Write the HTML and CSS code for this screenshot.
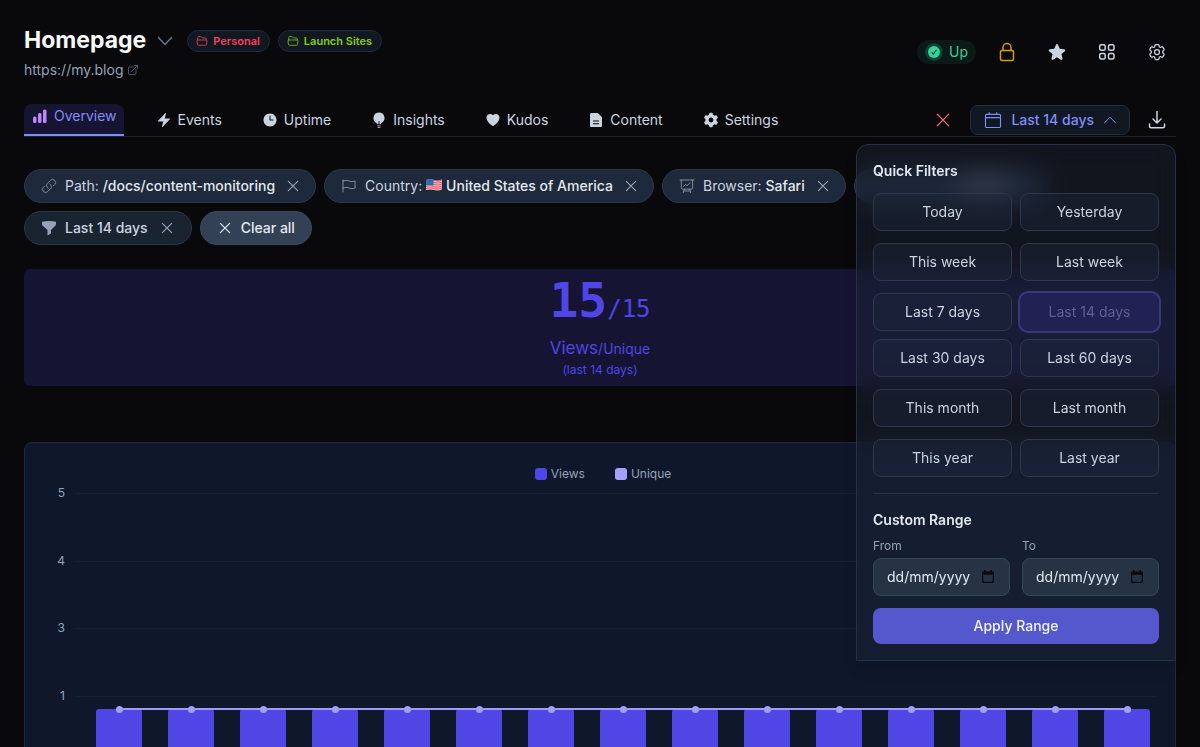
FILE: index.html
```html
<!DOCTYPE html>
<html lang="en">
<head>
<meta charset="utf-8">
<meta name="viewport" content="width=device-width, initial-scale=1">
<title>Homepage</title>
<link rel="stylesheet" href="styles.css">
</head>
<body>
<svg class="sprite" aria-hidden="true">
  <symbol id="folder" viewBox="0 0 24 24"><path d="M3.500 10V5a2 2 0 0 1 2-2h4.300l3 3h5.700a2 2 0 0 1 2 2v2M3.500 10h17a1.500 1.500 0 0 1 1.500 1.700l-.8 7a2 2 0 0 1-2 1.800H4.800a2 2 0 0 1-2-1.800l-.8-7A1.500 1.500 0 0 1 3.500 10z"/></symbol>
  <symbol id="x" viewBox="0 0 24 24"><path d="M5 5l14 14M19 5L5 19"/></symbol>
  <symbol id="calendar" viewBox="0 0 24 24"><path d="M7 2v2.500M17 2v2.500M2 8.800h20M3.500 4.500h17A1.500 1.500 0 0 1 22 6v14.500a1.500 1.500 0 0 1-1.500 1.500h-17A1.500 1.500 0 0 1 2 20.500V6a1.500 1.500 0 0 1 1.500-1.500z"/></symbol>
  <symbol id="date" viewBox="0 0 12 14"><path fill-rule="evenodd" d="M2 0h1.500v1.500h5V0H10v1.500h.8A1.200 1.200 0 0 1 12 2.700v9.100a1.200 1.200 0 0 1-1.200 1.200H1.200A1.200 1.200 0 0 1 0 11.800V2.700a1.200 1.200 0 0 1 1.200-1.200H2zM1.300 4.800v6.900h9.400V4.800z"/></symbol>
</svg>
<main class="page">
  <header class="header">
    <div>
      <div class="title-row">
        <h1 class="title">Homepage</h1>
        <button class="bare chevron" aria-label="Switch site"><svg class="line icon-16" viewBox="0 0 16 16"><path d="M1.500 4.500L8 11.500l6.500-7"/></svg></button>
        <span class="tag tag-red"><svg class="line icon-12"><use href="#folder"/></svg>Personal</span>
        <span class="tag tag-green"><svg class="line icon-12"><use href="#folder"/></svg>Launch Sites</span>
      </div>
      <a class="site-link" href="#">https://my.blog<svg class="line icon-12" viewBox="0 0 24 24"><path d="M13.500 6H5.250A2.250 2.250 0 0 0 3 8.250v10.500A2.250 2.250 0 0 0 5.250 21h10.500A2.250 2.250 0 0 0 18 18.750V10.500M8 16L21 3M15 3h6v6"/></svg></a>
    </div>
    <div class="actions">
      <span class="status"><span class="status-dot"><svg class="icon-12" viewBox="0 0 12 12"><circle cx="6" cy="6" r="6" fill="#34d399"/><path d="M3.600 6.300l1.700 1.700 3.100-4" fill="none" stroke="#0b4a38" stroke-width="1.200"/></svg></span>Up</span>
      <button class="icon-button lock" aria-label="Privacy"><svg class="line icon-20" viewBox="0 0 20 20"><rect x="3.500" y="8.500" width="13" height="10" rx="1.500"/><path d="M6 8.500V5.500a4 4 0 0 1 8 0v3"/></svg></button>
      <button class="icon-button" aria-label="Favourite"><svg class="solid icon-20" viewBox="0 0 24 24"><path d="M10.788 3.210c.448-1.077 1.976-1.077 2.424 0l2.082 5.006 5.404.434c1.164.093 1.636 1.545.749 2.305l-4.117 3.527 1.257 5.273c.271 1.136-.964 2.033-1.960 1.425L12 18.354l-4.627 2.826c-.996.608-2.231-.289-1.960-1.425l1.257-5.273-4.117-3.527c-.887-.760-.415-2.212.749-2.305l5.404-.434z"/></svg></button>
      <button class="icon-button" aria-label="Sites"><svg class="line icon-20" viewBox="0 0 20 20"><rect x="2.700" y="2.700" width="5.500" height="5.500" rx="1.500"/><rect x="11.500" y="2.700" width="5.500" height="5.500" rx="1.500"/><rect x="2.700" y="11.500" width="5.500" height="5.500" rx="1.500"/><rect x="11.500" y="11.500" width="5.500" height="5.500" rx="1.500"/></svg></button>
      <button class="icon-button gear" aria-label="Preferences"><svg class="line icon-20" viewBox="0 0 24 24"><path d="M9.594 3.940c.090-.542.560-.940 1.110-.940h2.593c.550 0 1.020.398 1.110.940l.213 1.281c.063.374.313.686.645.870.074.040.147.083.220.127.325.196.720.257 1.075.124l1.217-.456a1.125 1.125 0 0 1 1.370.490l1.296 2.247a1.125 1.125 0 0 1-.260 1.431l-1.003.827c-.293.241-.438.613-.430.992a7 7 0 0 1 0 .255c-.008.378.137.750.430.991l1.004.827c.424.350.534.955.260 1.430l-1.298 2.247a1.125 1.125 0 0 1-1.369.491l-1.217-.456c-.355-.133-.750-.072-1.076.124a7 7 0 0 1-.220.128c-.331.183-.581.495-.644.869l-.213 1.281c-.090.543-.560.940-1.110.940h-2.594c-.550 0-1.019-.398-1.110-.940l-.213-1.281c-.062-.374-.312-.686-.644-.870a7 7 0 0 1-.220-.127c-.325-.196-.720-.257-1.076-.124l-1.217.456a1.125 1.125 0 0 1-1.369-.490l-1.297-2.247a1.125 1.125 0 0 1 .260-1.431l1.004-.827c.292-.240.437-.613.430-.991a7 7 0 0 1 0-.255c.007-.380-.138-.751-.430-.992l-1.004-.827a1.125 1.125 0 0 1-.260-1.430l1.297-2.247a1.125 1.125 0 0 1 1.370-.491l1.216.456c.356.133.751.072 1.076-.124q.108-.066.220-.128c.332-.183.582-.495.644-.869z"/><circle cx="12" cy="12" r="3"/></svg></button>
    </div>
  </header>

  <div class="toolbar">
    <nav class="tabs" aria-label="Sections">
      <a class="tab tab-active" href="#"><svg class="solid icon-16" viewBox="0 0 16 16"><rect x="1" y="8.500" width="3.500" height="6.500" rx="1.500"/><rect x="6" y="5" width="3.500" height="10" rx="1.500"/><rect x="11" y="1.500" width="3.500" height="13.500" rx="1.500"/></svg>Overview</a>
      <a class="tab" href="#"><svg class="solid icon-16" viewBox="0 0 24 24"><path d="M14.600 1.600a.750.750 0 0 1 .359.852L12.982 9.750h7.268a.750.750 0 0 1 .548 1.262l-10.500 11.250a.750.750 0 0 1-1.272-.710l1.992-7.302H3.750a.750.750 0 0 1-.548-1.262l10.500-11.250a.750.750 0 0 1 .913-.143z"/></svg>Events</a>
      <a class="tab" href="#"><svg class="solid icon-16" viewBox="0 0 24 24"><path fill-rule="evenodd" d="M12 2.250C6.615 2.250 2.250 6.615 2.250 12s4.365 9.750 9.750 9.750 9.750-4.365 9.750-9.750S17.385 2.250 12 2.250zM12.750 6a.750.750 0 0 0-1.500 0v6c0 .414.336.750.750.750h4.500a.750.750 0 0 0 0-1.500h-3.750z"/></svg>Uptime</a>
      <a class="tab" href="#"><svg class="solid icon-16" viewBox="0 0 24 24"><path fill-rule="evenodd" d="M12 .750a8.250 8.250 0 0 0-4.135 15.390c.686.398 1.115 1.008 1.134 1.623.010.380.270.700.635.788.500.121 1.010.213 1.530.274.044-.120.086-.250.086-.400v-4.300a.750.750 0 0 1 1.500 0v4.300c0 .150.040.280.086.400.520-.060 1.030-.153 1.530-.274a.830.830 0 0 0 .635-.788c.019-.615.448-1.225 1.134-1.623A8.250 8.250 0 0 0 12 .750zM9.500 20.200l5 0v1.200h-5zM10 22.500h4v1.200h-4z"/></svg>Insights</a>
      <a class="tab" href="#"><svg class="solid icon-16" viewBox="0 0 24 24"><path d="M11.645 20.910C9 19.600 2.250 14.500 2.250 8.250 2.250 5.322 4.714 3 7.688 3A5.500 5.500 0 0 1 12 5.052 5.500 5.500 0 0 1 16.313 3c2.973 0 5.437 2.322 5.437 5.250 0 6.250-6.750 11.350-9.395 12.660a.750.750 0 0 1-.710 0z"/></svg>Kudos</a>
      <a class="tab" href="#"><svg class="solid icon-16" viewBox="0 0 16 16"><path fill-rule="evenodd" d="M3.500 1h6.300L14 5.300v8.400a1.300 1.300 0 0 1-1.300 1.300H3.300A1.300 1.300 0 0 1 2 13.700V2.500A1.500 1.500 0 0 1 3.500 1zM5 8.500v1h6v-1zm0 2.800v1h6v-1z"/></svg>Content</a>
      <a class="tab" href="#"><svg class="solid icon-16" viewBox="0 0 20 20"><path fill-rule="evenodd" d="M7.840 1.804A1 1 0 0 1 8.820 1h2.360a1 1 0 0 1 .980.804l.331 1.652a7 7 0 0 1 1.929 1.115l1.598-.540a1 1 0 0 1 1.186.447l1.180 2.044a1 1 0 0 1-.205 1.251l-1.267 1.113a7 7 0 0 1 0 2.228l1.267 1.113a1 1 0 0 1 .206 1.250l-1.180 2.045a1 1 0 0 1-1.187.447l-1.598-.540a7 7 0 0 1-1.929 1.115l-.330 1.652a1 1 0 0 1-.980.804H8.820a1 1 0 0 1-.980-.804l-.331-1.652a7 7 0 0 1-1.929-1.115l-1.598.540a1 1 0 0 1-1.186-.447l-1.180-2.044a1 1 0 0 1 .205-1.251l1.267-1.114a7 7 0 0 1 0-2.227L1.821 7.773a1 1 0 0 1-.206-1.250l1.180-2.045a1 1 0 0 1 1.187-.447l1.598.540A7 7 0 0 1 7.510 3.456zM10 13a3 3 0 1 0 0-6 3 3 0 0 0 0 6z"/></svg>Settings</a>
    </nav>
    <div class="range">
      <button class="bare clear-range" aria-label="Clear range"><svg class="line icon-20"><use href="#x"/></svg></button>
      <button class="range-button" aria-expanded="true"><svg class="line icon-18"><use href="#calendar"/></svg>Last 14 days<svg class="line icon-12 caret" viewBox="0 0 12 12"><path d="M.500 8.800L6 3.200l5.500 5.600"/></svg></button>
      <button class="bare download" aria-label="Download"><svg class="line icon-18" viewBox="0 0 18 18"><path d="M9 .500v11M5 8l4 4 4-4M1.500 13v2.200a1.500 1.500 0 0 0 1.500 1.500h12a1.500 1.500 0 0 0 1.500-1.500V13"/></svg></button>
    </div>

    <section class="popover" aria-label="Date range">
      <h2 class="popover-title">Quick Filters</h2>
      <div class="quick">
        <button class="option">Today</button><button class="option">Yesterday</button>
        <button class="option">This week</button><button class="option">Last week</button>
        <button class="option">Last 7 days</button><button class="option option-active" disabled>Last 14 days</button>
      </div>
      <div class="quick">
        <button class="option">Last 30 days</button><button class="option">Last 60 days</button>
        <button class="option">This month</button><button class="option">Last month</button>
        <button class="option">This year</button><button class="option">Last year</button>
      </div>
      <form class="custom">
        <h2 class="popover-title">Custom Range</h2>
        <div class="dates">
          <label class="date-label">From<span class="date-field"><input class="date-input" type="text" placeholder="dd/mm/yyyy"><svg class="date-icon"><use href="#date"/></svg></span></label>
          <label class="date-label">To<span class="date-field"><input class="date-input" type="text" placeholder="dd/mm/yyyy"><svg class="date-icon"><use href="#date"/></svg></span></label>
        </div>
        <button class="apply" type="button">Apply Range</button>
      </form>
    </section>
  </div>

  <div class="filters">
    <span class="pill"><svg class="line icon-16" viewBox="0 0 24 24"><path d="M13.190 8.688a4.500 4.500 0 0 1 1.242 7.244l-4.500 4.500a4.500 4.500 0 0 1-6.364-6.364l1.757-1.757m13.350-.622l1.757-1.757a4.500 4.500 0 0 0-6.364-6.364l-4.500 4.500a4.500 4.500 0 0 0 1.242 7.244"/></svg><span>Path: <b>/docs/content-monitoring</b></span><button class="bare pill-x" aria-label="Remove path filter"><svg class="line icon-16"><use href="#x"/></svg></button></span>
    <span class="pill"><svg class="line icon-16" viewBox="0 0 24 24"><path d="M3 3v1.500M3 21v-6m0 0l2.770-.693a9 9 0 0 1 6.208.682l.108.054a9 9 0 0 0 6.086.710l3.114-.732a48.500 48.500 0 0 1-.005-10.499l-3.110.732a9 9 0 0 1-6.085-.711l-.108-.054a9 9 0 0 0-6.208-.682L3 4.500M3 15V4.500"/></svg><span>Country: <svg class="flag" viewBox="0 0 16 12" role="img" aria-label="US flag"><path fill="#f4c4c8" d="M0 1q4-1.500 8 0t8-.500v10q-4 1.500-8 .500t-8 0z"/><path stroke="#e35361" stroke-width="1" fill="none" d="M0 1.500q4-1.500 8 0t8-.500M0 3.500q4-1.500 8 0t8-.500M0 5.500q4-1.500 8 0t8-.500M0 7.500q4-1.500 8 0t8-.500M0 9.500q4-1.500 8 0t8-.500"/><path fill="#2c6db8" d="M0 1q4-1.500 7.500-.200v5.700q-3.500-1-7.500 0z"/></svg> <b>United States of America</b></span><button class="bare pill-x" aria-label="Remove country filter"><svg class="line icon-16"><use href="#x"/></svg></button></span>
    <span class="pill"><svg class="line icon-16" viewBox="0 0 24 24"><path d="M1.500 3h21M3.500 3v11.500A2.200 2.200 0 0 0 5.700 16.700h12.600a2.200 2.200 0 0 0 2.200-2.200V3M8 16.700L6.500 22M16 16.700l1.500 5.300M7.200 19.500h9.600M7 12.500l3-3 2.200 2.200c1.200-2 2.800-3.500 4.600-4.400"/></svg><span>Browser: <b>Safari</b></span><button class="bare pill-x" aria-label="Remove browser filter"><svg class="line icon-16"><use href="#x"/></svg></button></span>
    <span class="pill pill-covered" aria-hidden="true"></span>
    <span class="pill pill-dim"><svg class="solid icon-16" viewBox="0 0 16 16"><path d="M1 1.800C3.200 1.300 5.600 1 8 1s4.800.300 7 .800v2.300c0 .700-.300 1.300-.700 1.700L10 10v3.500L6.500 15.500V10L1.700 5.800C1.300 5.400 1 4.800 1 4.100z"/></svg><span>Last 14 days</span><button class="bare pill-x" aria-label="Remove date filter"><svg class="line icon-16"><use href="#x"/></svg></button></span>
    <button class="pill pill-clear"><svg class="line icon-16"><use href="#x"/></svg>Clear all</button>
  </div>

  <section class="stats">
    <div class="count"><strong class="count-main">15</strong>/15</div>
    <div class="metric">Views<span class="metric-small">/Unique</span></div>
    <div class="period">(last 14 days)</div>
  </section>

  <section class="chart" aria-label="Views and unique visitors">
    <div class="legend"><span class="key key-views">Views</span><span class="key key-unique">Unique</span></div>
    <div class="plot">
      <div class="scale"><span>5</span><span>4</span><span>3</span><span>1</span></div>
      <div class="grid"><i></i><i></i><i></i><i></i></div>
      <div class="bars"><i class="bar"></i><i class="bar"></i><i class="bar"></i><i class="bar"></i><i class="bar"></i><i class="bar"></i><i class="bar"></i><i class="bar"></i><i class="bar"></i><i class="bar"></i><i class="bar"></i><i class="bar"></i><i class="bar"></i><i class="bar"></i><i class="bar"></i></div>
    </div>
  </section>
</main>
</body>
</html>
```

FILE: styles.css
```css
* { box-sizing: border-box; }
body {
  margin: 0;
  background: #09090b;
  color: #cbd5e1;
  font: 14px/20px Inter, "Liberation Sans", sans-serif;
}
.page { padding: 24px 24px 0; height: 100vh; overflow: hidden; }
button, input { font: inherit; color: inherit; }
button { cursor: pointer; }
a { color: inherit; text-decoration: none; }
h1, h2 { margin: 0; }
b { font-weight: 500; color: #e2e8f0; }
svg { flex: none; }
.sprite { display: none; }
.line { fill: none; stroke: currentColor; stroke-width: 1.5; stroke-linecap: round; stroke-linejoin: round; }
.solid { fill: currentColor; }
.icon-12 { width: 12px; height: 12px; }
.icon-16 { width: 16px; height: 16px; }
.icon-18 { width: 18px; height: 18px; }
.icon-20 { width: 20px; height: 20px; }
.bare { display: inline-flex; padding: 0; border: 0; background: none; }

.header { display: flex; justify-content: space-between; margin-bottom: 24px; }
.title-row { display: flex; align-items: center; height: 33px; }
.title { font-size: 23px; line-height: 33px; font-weight: 700; color: #f8fafc; }
.chevron { margin: 0 14px 0 11px; color: #64748b; }
.tag {
  display: flex; align-items: center; gap: 5px; height: 22px; padding: 0 9px 0 8px;
  border: 1px solid #1e293b; border-radius: 11px; background: #111820;
  font-size: 11px; font-weight: 600;
}
.tag .line { stroke-width: 2; opacity: .8; }
.tag-red { color: #f43f5e; margin-right: 8px; }
.tag-green { color: #84cc16; }
.site-link { display: flex; align-items: center; gap: 4px; margin-top: 3px; color: #94a3b8; }
.site-link svg { color: #64748b; }

.actions { display: flex; align-items: center; height: 56px; }
.status {
  display: flex; align-items: center; gap: 6px; height: 24px; padding: 0 8px; margin-right: 6px;
  border-radius: 12px; background: #0b1a17; color: #34d399;
}
.status-dot { display: flex; padding: 3px; border-radius: 9px; background: #0c4032; }
.icon-button {
  display: flex; align-items: center; justify-content: center; width: 50px; height: 40px;
  padding: 0; border: 0; background: none;
}
.gear { margin-right: -6px; }
.lock { color: #d99b14; }

.toolbar {
  position: relative; display: flex; justify-content: space-between;
  height: 33px; border-bottom: 1px solid #1b222d;
}
.tabs { display: flex; gap: 24px; }
.tab { display: flex; align-items: center; gap: 6px; padding: 0 8px; }
.tab-active {
  padding: 0 7px 6px 8px; border-bottom: 2px solid #818cf8; border-radius: 8px 8px 0 0;
  background: #161430; color: #818cf8;
}
.tab-active svg { color: #c084fc; }
.range { display: flex; align-items: center; }
.clear-range { margin-right: 17px; color: #f87171; }
.range-button {
  display: flex; align-items: center; gap: 9px; height: 30px; padding: 0 13px;
  border: 1px solid #232c40; border-radius: 8px; background: #121821;
  color: #818cf8; font-weight: 500;
}
.caret { margin-left: 1px; stroke-width: 1; }
.download { margin: 0 10px 0 18px; }

.popover {
  position: absolute; z-index: 2; top: 40px; right: 0; width: 320px; padding: 16px;
  border: 1px solid #263145; border-radius: 12px 12px 0 0;
  background: rgba(30, 41, 59, .4); backdrop-filter: blur(12px);
  box-shadow: 0 10px 15px -3px rgba(0, 0, 0, .15);
}
.popover-title { font-size: 14px; line-height: 20px; font-weight: 600; color: #e2e8f0; }
.quick { display: grid; grid-template-columns: 1fr 1fr; gap: 12px 8px; margin-top: 8px; }
.popover-title + .quick { margin-top: 12px; }
.option {
  height: 38px; padding: 0; border: 1px solid #2d394b; border-radius: 8px;
  background: rgba(30, 41, 59, .4); color: #cbd5e1;
}
.option-active {
  border-color: #222153; background: #222153; color: #5e6093;
  box-shadow: 0 0 0 2px #36397a;
}
.custom { margin-top: 16px; padding-top: 16px; border-top: 1px solid #263347; }
.dates { display: grid; grid-template-columns: 1fr 1fr; gap: 12px; margin-top: 8px; }
.date-label { font-size: 12px; line-height: 16px; color: #94a3b8; }
.date-field { position: relative; display: block; margin-top: 4px; }
.date-input {
  display: block; width: 100%; height: 38px; padding: 0 13px 1px;
  border: 1px solid #37455a; border-radius: 8px; background: #263345;
  color: #e2e8f0; font-size: 14px;
}
.date-input::placeholder { color: #e2e8f0; opacity: 1; }
.date-icon { position: absolute; top: 12px; right: 16px; width: 12px; height: 14px; fill: #07090c; }
.apply {
  width: 100%; height: 36px; margin-top: 12px; border: 0; border-radius: 8px;
  background: #5558cd; color: #f1f5f9; font-weight: 500;
}

.filters { display: flex; flex-wrap: wrap; gap: 8px; margin-top: 32px; }
.pill {
  display: inline-flex; align-items: center; gap: 8px; height: 34px; padding: 0 14px 0 16px;
  border: 1px solid #2a384c; border-radius: 17px; background: #1e293b;
}
.pill > svg { color: #94a3b8; stroke-width: 1.2; }
.pill-x { margin-left: 2px; color: #94a3b8; }
.pill-x .line { stroke-width: 1.8; }
.pill-dim { padding-right: 16px; background: #1a2330; font-weight: 500; }
.pill-dim .pill-x { margin-left: 3px; }
.pill-covered { width: 192px; background: linear-gradient(90deg, #1e293b 50%, #3a4152 60%, #3a4152 76%, #1e293b 86%); }
.pill-clear { padding: 0 16px; background: #334155; border-color: #3a495e; color: #e2e8f0; font-weight: 500; }
.pill-clear > svg { color: #e2e8f0; stroke-width: 1.8; }
.flag { width: 16px; height: 12px; }

.stats {
  margin-top: 24px; padding: 6px 0 8px; border-radius: 6px;
  background: #161433; color: #4f46e5; text-align: center;
}
.count { font: 24px/51px "DejaVu Sans Mono", monospace; }
.count-main { font-size: 48px; font-weight: 700; }
.metric { font-size: 17px; line-height: 26px; }
.metric-small { font-size: 14px; }
.period { font-size: 12px; line-height: 16px; }

.chart {
  margin-top: 56px; padding: 23px 20px; border: 1px solid #1e293b; border-radius: 8px;
  background: #0f172a; color: #94a3b8; font-size: 12px; line-height: 16px;
}
.legend { display: flex; justify-content: center; gap: 30px; padding-left: 6px; }
.key { display: flex; align-items: center; gap: 4px; }
.key::before { content: ""; width: 12px; height: 12px; border-radius: 3px; background: #4f46e5; }
.key-unique::before { background: #a5a0ff; }
.plot { display: grid; grid-template-columns: 20px 1fr; column-gap: 10px; height: 270px; margin-top: 11px; }
.scale, .grid { display: grid; grid-template-rows: repeat(4, 1fr); text-align: right; }
.scale span { margin-top: -8px; }
.grid, .bars { grid-column: 2; grid-row: 1; }
.grid i { border-top: 1px solid #172033; }
.bars { position: relative; display: flex; align-items: flex-end; gap: 26px; padding: 0 5px 0 21px; }
.bar { position: relative; flex: 1; height: 20%; border-radius: 3px 3px 0 0; background: #4f46e5; }
.bar::after {
  content: ""; position: absolute; z-index: 1; top: -3px; left: calc(50% - 3px);
  width: 7px; height: 7px; border-radius: 50%; background: #a5a0ff;
}
.bars::after {
  content: ""; position: absolute; bottom: 20%; left: 44px; right: 28px;
  height: 2px; margin-bottom: -1px; background: #a09bfb;
}
```
